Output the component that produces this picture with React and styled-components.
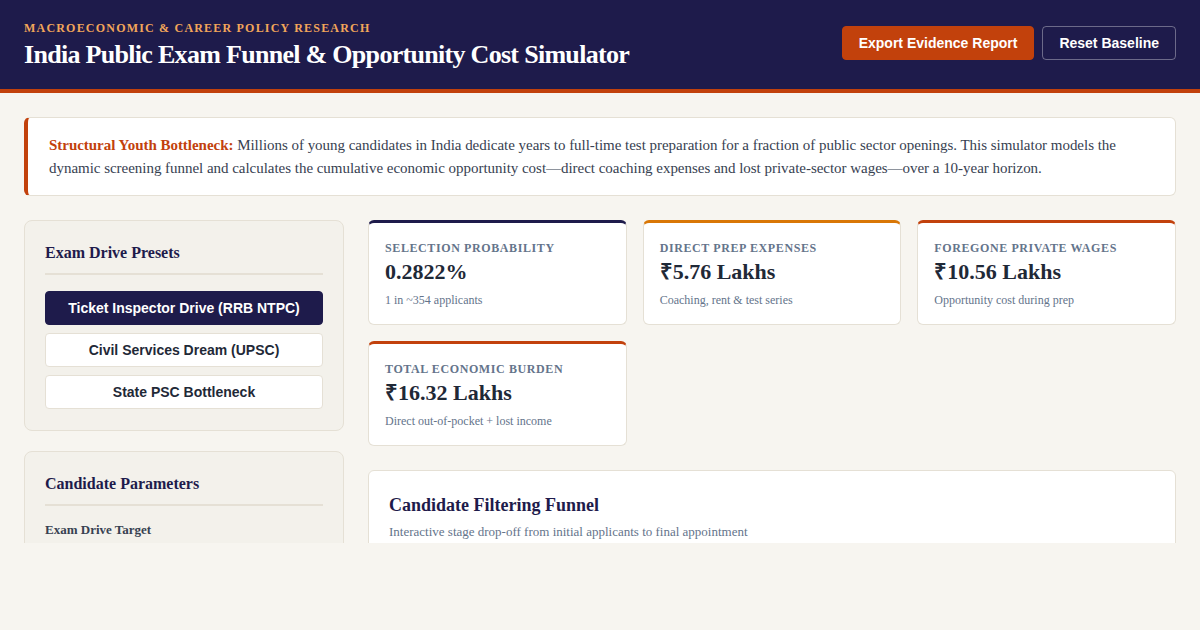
import React, { useState } from "react";
import styled, { createGlobalStyle } from "styled-components";

const GlobalStyle = createGlobalStyle`
	* { box-sizing: border-box; }
	html, body {
		margin: 0;
		background: #f7f5f0;
		font-family: "Liberation Serif", "Times New Roman", serif;
		color: #1f2937;
	}
`;

const presets = [
	"Ticket Inspector Drive (RRB NTPC)",
	"Civil Services Dream (UPSC)",
	"State PSC Bottleneck",
];

const stats = [
	{ label: "Selection Probability", value: "0.2822%", note: "1 in ~354 applicants", accent: "#1e1b4b" },
	{ label: "Direct Prep Expenses", value: "₹5.76 Lakhs", note: "Coaching, rent & test series", accent: "#d97706" },
	{ label: "Foregone Private Wages", value: "₹10.56 Lakhs", note: "Opportunity cost during prep", accent: "#c2410c" },
	{ label: "Total Economic Burden", value: "₹16.32 Lakhs", note: "Direct out-of-pocket + lost income", accent: "#c2410c" },
];

export default function App() {
	const [active, setActive] = useState(0);

	return (
		<Shell>
			<GlobalStyle />
			<Header>
				<div>
					<Eyebrow>Macroeconomic &amp; Career Policy Research</Eyebrow>
					<Title>India Public Exam Funnel &amp; Opportunity Cost Simulator</Title>
				</div>
				<Actions>
					<HeaderButton $primary>Export Evidence Report</HeaderButton>
					<HeaderButton onClick={() => setActive(0)}>Reset Baseline</HeaderButton>
				</Actions>
			</Header>

			<Main>
				<Intro>
					<strong>Structural Youth Bottleneck:</strong> Millions of young candidates in India
					dedicate years to full-time test preparation for a fraction of public sector openings.
					This simulator models the dynamic screening funnel and calculates the cumulative economic
					opportunity cost—direct coaching expenses and lost private-sector wages—over a 10-year
					horizon.
				</Intro>

				<Layout>
					<Sidebar>
						<Panel>
							<PanelTitle>Exam Drive Presets</PanelTitle>
							<PresetList>
								{presets.map((p, i) => (
									<PresetButton key={p} $active={i === active} onClick={() => setActive(i)}>
										{p}
									</PresetButton>
								))}
							</PresetList>
						</Panel>
						<Panel>
							<PanelTitle>Candidate Parameters</PanelTitle>
							<FieldLabel>Exam Drive Target</FieldLabel>
						</Panel>
					</Sidebar>

					<Content>
						<StatGrid>
							{stats.map((s) => (
								<StatCard key={s.label} $accent={s.accent}>
									<StatLabel>{s.label}</StatLabel>
									<StatValue>{s.value}</StatValue>
									<StatNote>{s.note}</StatNote>
								</StatCard>
							))}
						</StatGrid>

						<FunnelCard>
							<FunnelTitle>Candidate Filtering Funnel</FunnelTitle>
							<FunnelSub>Interactive stage drop-off from initial applicants to final appointment</FunnelSub>
						</FunnelCard>
					</Content>
				</Layout>
			</Main>
		</Shell>
	);
}

// styled components
const Shell = styled.div`
	height: 543px;
	overflow: hidden;
`;

const Header = styled.header`
	background: #1e1b4b;
	border-bottom: 4px solid #c2410c;
	height: 93px;
	padding: 0 24px;
	display: flex;
	align-items: center;
	justify-content: space-between;
`;

const Eyebrow = styled.div`
	color: #f2a65a;
	font-size: 12px;
	font-weight: 700;
	letter-spacing: 1.2px;
	text-transform: uppercase;
	line-height: 14px;
	margin-bottom: 4px;
	margin-top: 2px;
`;

const Title = styled.h1`
	margin: 0;
	color: #ffffff;
	font-size: 26px;
	font-weight: 700;
	letter-spacing: -0.7px;
	line-height: 32px;
`;

const Actions = styled.div`
	display: flex;
	gap: 8px;
	margin-top: -4px;
`;

const HeaderButton = styled.button`
	height: 34px;
	padding: 0 16px;
	border-radius: 4px;
	font-family: "Liberation Sans", Arial, sans-serif;
	font-size: 14px;
	font-weight: 700;
	color: #ffffff;
	cursor: pointer;
	background: ${(p) => (p.$primary ? "#c2410c" : "transparent")};
	border: 1px solid ${(p) => (p.$primary ? "#c2410c" : "rgba(255,255,255,0.35)")};
`;

const Main = styled.main`
	padding: 24px;
`;

const Intro = styled.p`
	margin: 0 0 24px;
	background: #ffffff;
	border: 1px solid #e5e0d5;
	border-left: 4px solid #c2410c;
	border-radius: 6px;
	padding: 16px 20px 15px 21px;
	font-size: 15px;
	line-height: 23px;
	letter-spacing: -0.03px;
	color: #374151;

	strong {
		color: #c2410c;
	}
`;

const Layout = styled.div`
	display: grid;
	grid-template-columns: 320px 1fr;
	gap: 24px;
	align-items: start;
`;

const Sidebar = styled.aside`
	display: flex;
	flex-direction: column;
	gap: 20px;
`;

const Panel = styled.section`
	background: #f3f1eb;
	border: 1px solid #e5e0d5;
	border-radius: 8px;
	padding: 22px 20px 21px;
`;

const PanelTitle = styled.h2`
	margin: 0 0 16px;
	padding-bottom: 10px;
	border-bottom: 2px solid #e5e0d5;
	font-size: 16px;
	line-height: 20px;
	font-weight: 700;
	color: #1e1b4b;
`;

const PresetList = styled.div`
	display: flex;
	flex-direction: column;
	gap: 8px;
`;

const PresetButton = styled.button`
	height: 34px;
	border-radius: 4px;
	font-family: "Liberation Sans", Arial, sans-serif;
	font-size: 14px;
	font-weight: 700;
	cursor: pointer;
	background: ${(p) => (p.$active ? "#1e1b4b" : "#ffffff")};
	color: ${(p) => (p.$active ? "#ffffff" : "#1f2937")};
	border: 1px solid ${(p) => (p.$active ? "#1e1b4b" : "#e5e0d5")};
`;

const FieldLabel = styled.div`
	font-size: 13px;
	line-height: 16px;
	font-weight: 700;
	color: #374151;
`;

const Content = styled.div`
	display: flex;
	flex-direction: column;
	gap: 24px;
`;

const StatGrid = styled.div`
	display: grid;
	grid-template-columns: repeat(3, 1fr);
	gap: 16px;
`;

const StatCard = styled.div`
	background: #ffffff;
	border: 1px solid #e5e0d5;
	border-top: 3px solid ${(p) => p.$accent};
	border-radius: 6px;
	padding: 18px 16px 16px;
`;

const StatLabel = styled.div`
	font-size: 12px;
	line-height: 15px;
	font-weight: 700;
	letter-spacing: 0.6px;
	text-transform: uppercase;
	color: #64748b;
`;

const StatValue = styled.div`
	margin-top: 2px;
	font-size: 22px;
	line-height: 28px;
	font-weight: 700;
	color: #1f2937;
`;

const StatNote = styled.div`
	margin-top: 6px;
	font-size: 12px;
	line-height: 16px;
	color: #64748b;
`;

const FunnelCard = styled.section`
	background: #ffffff;
	border: 1px solid #e5e0d5;
	border-radius: 6px;
	padding: 22px 20px;
	min-height: 200px;
`;

const FunnelTitle = styled.h2`
	margin: 0 0 6px;
	font-size: 18px;
	line-height: 24px;
	font-weight: 700;
	color: #1e1b4b;
`;

const FunnelSub = styled.div`
	font-size: 13px;
	line-height: 18px;
	color: #64748b;
`;
